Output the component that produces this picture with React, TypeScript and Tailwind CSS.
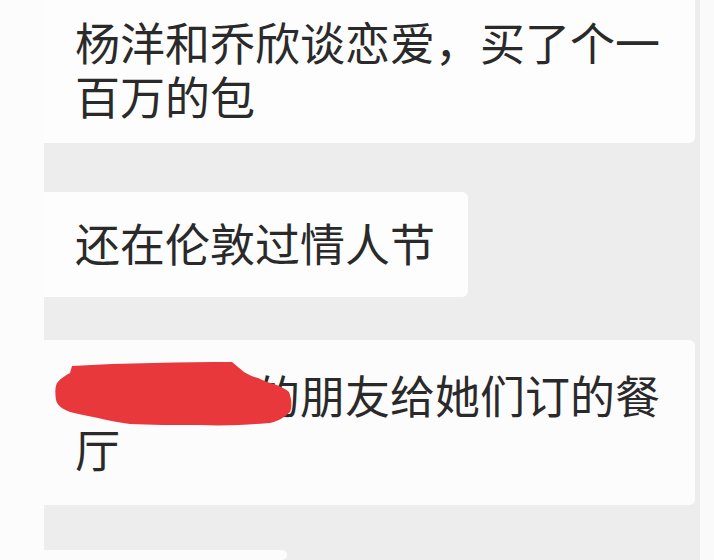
export default function App() {
  const font = { fontFamily: '"Noto Sans CJK SC", "Noto Sans", sans-serif' };

  return (
    <div className="flex w-[714px] h-[560px] overflow-hidden bg-[#fbfbfb]" style={font}>
      {/* left margin */}
      <div className="w-[44px] shrink-0 bg-[#fcfcfc]" />

      {/* chat column */}
      <div className="w-[656px] shrink-0 flex flex-col items-start bg-[#ededed] text-[45px] leading-[54px] text-[#2a2a2a]">
        <div className="w-[651px] pl-[31px] pr-[20px] pt-[15px] pb-[20px] bg-[#fdfdfd] rounded-br-[6px]">
          杨洋和乔欣谈恋爱，买了个一百万的包
        </div>

        <div className="mt-[49px] w-[424px] pl-[31px] pt-[24px] pb-[27px] bg-[#fdfdfd] rounded-r-[6px]">
          还在伦敦过情人节
        </div>

        <div className="relative mt-[43px] w-[651px] pl-[31px] pr-[20px] pt-[28px] pb-[29px] bg-[#fdfcfd] rounded-r-[6px]">
          <span className="text-transparent">某某某某</span>的朋友给她们订的餐厅
          {/* red redaction scribble */}
          <svg
            className="absolute left-0 top-0"
            width="270"
            height="100"
            viewBox="0 0 270 100"
          >
            <defs>
              <filter id="soft" x="-10%" y="-10%" width="120%" height="120%">
                <feGaussianBlur stdDeviation="0.7" />
              </filter>
            </defs>
            <path
              d="M28 26 C80 23 140 22 188 22 L200 32 C205 35 209 37 214 38 C220 41 225 43 230 44 C237 47 242 49 245 52 C248 60 248 67 246 72 C240 78 234 81 226 83 C200 85 180 86 156 85 C130 85 106 85 86 84 C72 82 62 80 54 78 C44 76 34 74 26 72 C18 69 13 65 12 60 C11 53 11 47 13 43 C17 38 22 35 26 33 Z"
              fill="#e8373a"
              filter="url(#soft)"
            />
          </svg>
        </div>

        <div className="mt-[45px] w-[243px] h-[40px] bg-[#fdfcfd] rounded-r-[6px]" />
      </div>

      {/* right margin */}
      <div className="flex-1 bg-[#fafafa]" />
    </div>
  );
}
